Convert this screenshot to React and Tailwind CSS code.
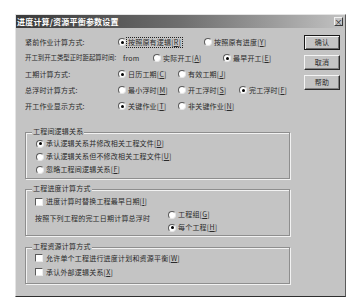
import React from "react";

function Radio({ checked }) {
  return (
    <span className="w-[8px] h-[8px] rounded-full bg-white border border-t-[#5a5a5a] border-l-[#5a5a5a] border-b-[#e6e6e6] border-r-[#e6e6e6] shrink-0 flex items-center justify-center">
      {checked && <span className="w-[3px] h-[3px] rounded-full bg-black" />}
    </span>
  );
}

function Check() {
  return (
    <span className="w-[8px] h-[8px] bg-white border border-t-[#5a5a5a] border-l-[#5a5a5a] border-b-[#ececec] border-r-[#ececec] shrink-0" />
  );
}

function Label({ text, k, focus }) {
  return (
    <span
      className={
        "whitespace-nowrap leading-none " +
        (focus ? "outline outline-1 outline-dotted outline-[#222] outline-offset-[1px]" : "")
      }
    >
      {text}[<u>{k}</u>]
    </span>
  );
}

function Opt({ w, checked, text, k, focus }) {
  return (
    <div className={"flex items-center gap-[2px] shrink-0 " + (w || "")}>
      <Radio checked={checked} />
      <Label text={text} k={k} focus={focus} />
    </div>
  );
}

function Btn({ children, def }) {
  return (
    <div
      className={
        "w-[36px] h-[15px] flex items-center justify-center text-[7px] leading-none bg-[#c4c4c4] border " +
        (def
          ? "border-[#1a1a1a] shadow-[inset_1px_1px_0_#f4f4f4,inset_-1px_-1px_0_#6a6a6a]"
          : "border-t-[#f4f4f4] border-l-[#f4f4f4] border-b-[#2a2a2a] border-r-[#2a2a2a] shadow-[inset_-1px_-1px_0_#808080]")
      }
    >
      {children}
    </div>
  );
}

function Group({ title, className, children }) {
  return (
    <div
      className={
        "relative w-[265px] border border-[#8e8e8e] shadow-[1px_1px_0_#f2f2f2,inset_1px_1px_0_#f2f2f2] " +
        className
      }
    >
      <span className="absolute -top-[5px] left-[6px] bg-[#c4c4c4] px-[1px] text-[7px] leading-none whitespace-nowrap">
        {title}
      </span>
      {children}
    </div>
  );
}

export default function App() {
  return (
    <div className="w-[363px] h-[297px] bg-white pt-[14px] pl-[15px] font-['Noto_Sans_CJK_SC','Noto_Sans',sans-serif] text-[#2a2a2a] text-[7px] tracking-[0.2px] overflow-hidden">
      <div className="w-[331px] h-[283px] bg-[#c4c4c4] border border-t-[#e4e4e4] border-l-[#e4e4e4] border-r-[#5a5a5a] border-b-[#2e2e2e] flex flex-col">
        <div className="h-[13px] shrink-0 bg-gradient-to-r from-[#3a3a3a] via-[#6e6e6e] to-[#c2c2c2] flex items-center justify-between pl-[1px] pr-[2px]">
          <span className="text-white text-[8px] font-bold leading-none whitespace-nowrap">
            进度计算/资源平衡参数设置
          </span>
          <span className="w-[9px] h-[9px] bg-[#c4c4c4] border border-t-[#f2f2f2] border-l-[#f2f2f2] border-b-[#3a3a3a] border-r-[#3a3a3a] flex items-center justify-center text-[8px] leading-none text-[#222]">
            ×
          </span>
        </div>
        <div className="flex flex-1">
          <div className="w-[288px] pl-[9px] pt-[6px] flex flex-col">
            <div className="h-[16px] flex items-center">
              <span className="w-[93px] shrink-0 whitespace-nowrap">紧前作业计算方式:</span>
              <Opt w="w-[86px]" checked text="按照原有逻辑" k="R" focus />
              <Opt text="按照原有进度" k="Y" />
            </div>
            <div className="h-[16px] flex items-center">
              <span className="w-[98px] shrink-0 whitespace-nowrap tracking-normal text-[6.4px]">开工到开工类型正时距起算时间:</span>
              <span className="w-[30px] shrink-0 whitespace-nowrap">from</span>
              <Opt w="w-[70px]" text="实际开工" k="A" />
              <Opt checked text="最早开工" k="E" />
            </div>
            <div className="h-[16px] flex items-center">
              <span className="w-[93px] shrink-0 whitespace-nowrap">工期计算方式:</span>
              <Opt w="w-[60px]" checked text="日历工期" k="C" />
              <Opt text="有效工期" k="J" />
            </div>
            <div className="h-[16px] flex items-center">
              <span className="w-[93px] shrink-0 whitespace-nowrap">总浮时计算方式:</span>
              <Opt w="w-[60px]" text="最小浮时" k="M" />
              <Opt w="w-[61px]" text="开工浮时" k="S" />
              <Opt checked text="完工浮时" k="F" />
            </div>
            <div className="h-[16px] flex items-center">
              <span className="w-[93px] shrink-0 whitespace-nowrap">开工作业显示方式:</span>
              <Opt w="w-[60px]" checked text="关键作业" k="T" />
              <Opt text="非关键作业" k="N" />
            </div>

            <Group title="工程间逻辑关系" className="mt-[18px] h-[47px] pt-[4px] pl-[10px] flex flex-col">
              <div className="h-[13px] flex items-center">
                <Opt checked text="承认逻辑关系并修改相关工程文件" k="D" />
              </div>
              <div className="h-[13px] flex items-center">
                <Opt text="承认逻辑关系但不修改相关工程文件" k="U" />
              </div>
              <div className="h-[13px] flex items-center">
                <Opt text="忽略工程间逻辑关系" k="F" />
              </div>
            </Group>

            <Group title="工程进度计算方式" className="mt-[10px] h-[47px] pt-[5px] pl-[9px] flex flex-col">
              <div className="h-[13px] flex items-center gap-[3px]">
                <Check />
                <Label text="进度计算时替换工程最早日期" k="I" />
              </div>
              <div className="flex items-start">
                <span className="w-[133px] shrink-0 h-[13px] mt-[4px] flex items-center whitespace-nowrap">
                  按照下列工程的完工日期计算总浮时
                </span>
                <div className="flex flex-col">
                  <div className="h-[13px] flex items-center">
                    <Opt text="工程组" k="G" />
                  </div>
                  <div className="h-[13px] flex items-center">
                    <Opt checked text="每个工程" k="H" />
                  </div>
                </div>
              </div>
            </Group>

            <Group title="工程资源计算方式" className="mt-[11px] h-[37px] pt-[3px] pl-[9px] flex flex-col">
              <div className="h-[14px] flex items-center gap-[3px]">
                <Check />
                <Label text="允许单个工程进行进度计划和资源平衡" k="W" />
              </div>
              <div className="h-[14px] flex items-center gap-[3px]">
                <Check />
                <Label text="承认外部逻辑关系" k="X" />
              </div>
            </Group>
          </div>
          <div className="pt-[7px] flex flex-col gap-[5px]">
            <Btn def>确认</Btn>
            <Btn>取消</Btn>
            <Btn>帮助</Btn>
          </div>
        </div>
      </div>
    </div>
  );
}
